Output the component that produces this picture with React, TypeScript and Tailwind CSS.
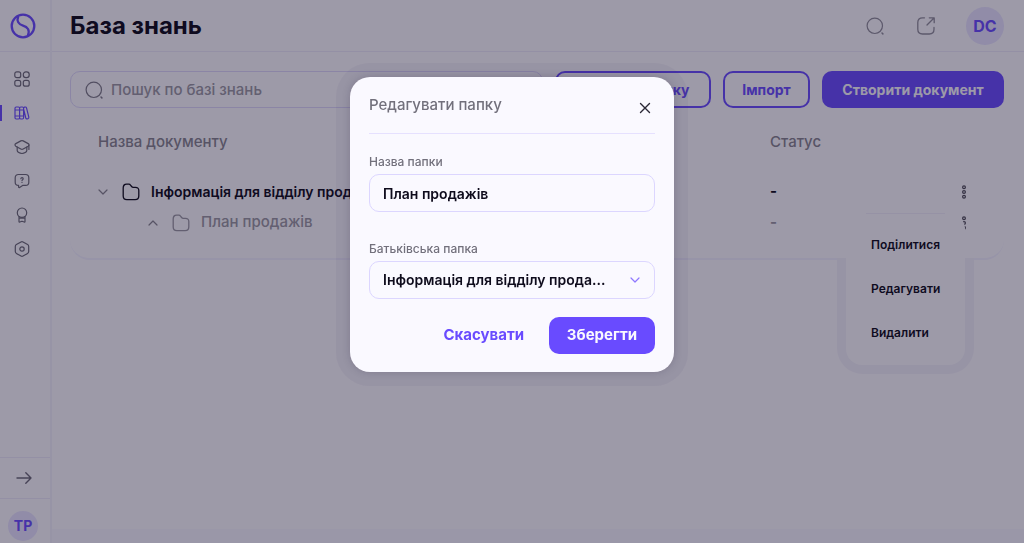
import { FC, ReactNode } from 'react'

type IconProps = { className?: string; children?: ReactNode; viewBox?: string }

const Icon: FC<IconProps> = ({ className = 'size-4', children, viewBox = '0 0 16 16' }) => (
    <svg
        className={`${className} shrink-0`}
        viewBox={viewBox}
        fill="none"
        stroke="currentColor"
        strokeWidth="1.2"
        strokeLinecap="round"
        strokeLinejoin="round"
        aria-hidden="true"
    >
        {children}
    </svg>
)

const SearchIcon: FC<{ className?: string }> = ({ className }) => (
    <Icon className={className} viewBox="0 0 18 18">
        <circle cx="8.8" cy="8.8" r="7.7" />
        <path d="m16 16 .9.9" strokeWidth="1.5" />
    </Icon>
)

const FolderIcon: FC<{ className?: string }> = ({ className }) => (
    <Icon className={className} viewBox="0 0 18 18">
        <path
            d="M1.2 5V13c0 2.4 1.2 3.6 3.6 3.6h8.4c2.4 0 3.6-1.2 3.6-3.6V7.6c0-2.2-1.2-3.3-3.4-3.3h-2.2c-.7 0-1.2-.3-1.6-.8L8.5 2.1C8.1 1.5 7.6 1.2 6.9 1.2H4.6C2.4 1.2 1.2 2.6 1.2 5Z"
            strokeWidth="1.3"
        />
    </Icon>
)

const DotsIcon: FC = () => (
    <Icon className="h-4 w-2" viewBox="0 0 8 16">
        <circle cx="4" cy="3.2" r="1.4" />
        <circle cx="4" cy="8" r="1.4" />
        <circle cx="4" cy="12.8" r="1.4" />
    </Icon>
)

const navItems: { label: string; active?: boolean; icon: ReactNode }[] = [
    {
        label: 'Головна',
        icon: (
            <>
                <rect x=".8" y=".8" width="5.9" height="5.9" rx="2" />
                <rect x="9.3" y=".8" width="5.9" height="5.9" rx="2.6" />
                <rect x=".8" y="9.3" width="5.9" height="5.9" rx="2" />
                <rect x="9.3" y="9.3" width="5.9" height="5.9" rx="2" />
            </>
        )
    },
    {
        label: 'База знань',
        active: true,
        icon: (
            <path d="M1 3.2C1 2.4 1.4 2 2.2 2h2.2c.8 0 1.2.4 1.2 1.2v9.6c0 .8-.4 1.2-1.2 1.2H2.2C1.4 14 1 13.6 1 12.8ZM5.6 3.2c0-.8.4-1.2 1.2-1.2h1.6c.8 0 1.2.4 1.2 1.2v9.6c0 .8-.4 1.2-1.2 1.2H6.8c-.8 0-1.2-.4-1.2-1.2M1 5h8.6M1 11h8.6M9.7 3.4c-.1-.7.1-1.1.8-1.3l.7-.1c.7-.1 1.1.2 1.3.9l2.3 9.3c.2.8-.1 1.2-.8 1.4l-.8.2c-.7.2-1.2-.1-1.4-.8L9.7 4.5" />
        )
    },
    {
        label: 'Курси',
        icon: (
            <>
                <path d="m6.8 1.9-5 2.7c-1.1.6-1.1 1.9 0 2.6l5 2.9c.8.5 1.6.5 2.4 0l5-2.9c1.1-.7 1.1-2 0-2.6l-5-2.7c-.8-.4-1.6-.4-2.4 0Z" />
                <path d="M3.2 8.2v3.3c0 1.6 2.5 3 4.8 3s4.8-1.4 4.8-3V8.2M14.9 6v4.5" />
            </>
        )
    },
    {
        label: 'Тести',
        icon: (
            <>
                <path d="M4.4 1.5h7.2c2 0 3.2 1.2 3.2 3.2v4.5c0 2-1.2 3.2-3.2 3.2H8.6l-3 2c-.5.3-1 .1-1-.5v-1.5c-2.2 0-3.4-1.2-3.4-3.2V4.7c0-2 1.2-3.2 3.2-3.2Z" />
                <path d="M6.9 5.7c0-1.5 2.3-1.4 2.3.1 0 .9-1.2.9-1.2 1.8M8 9.4v.1" />
            </>
        )
    },
    {
        label: 'Досягнення',
        icon: (
            <>
                <circle cx="8" cy="5.7" r="4.7" />
                <path d="M5 9.5v4.9c0 .6.3.8.8.6L8 14.2l2.2.8c.5.2.8 0 .8-.6V9.5M5 11.2h6" />
            </>
        )
    },
    {
        label: 'Налаштування',
        icon: (
            <>
                <path d="m7 .9-4.6 2.7c-.7.4-1.1 1-1.1 1.8v5.2c0 .8.4 1.4 1.1 1.8L7 15.1c.7.4 1.3.4 2 0l4.6-2.7c.7-.4 1.1-1 1.1-1.8V5.4c0-.8-.4-1.4-1.1-1.8L9 .9C8.3.5 7.7.5 7 .9Z" />
                <circle cx="8" cy="8" r="2.2" />
            </>
        )
    }
]

const Sidebar: FC = () => (
    <aside className="flex w-[52px] shrink-0 flex-col border-r-2 border-[#f1effc]">
        <a href="#" aria-label="На головну" className="flex h-[52px] items-center border-b border-[#ebe8fb] pl-[10px] text-[#694bff]">
            <Icon className="size-[26px]" viewBox="0 0 26 26">
                <circle cx="13" cy="13" r="11.3" strokeWidth="2.3" />
                <path d="M8.2 3.8C6.4 8 8.5 11.3 13 12.6c4.7 1.3 7 4.6 5 9.6" strokeWidth="2.3" />
            </Icon>
        </a>
        <nav className="flex flex-col gap-[18px] pt-[19px]">
            {navItems.map(({ label, active, icon }) => (
                <a
                    key={label}
                    href="#"
                    aria-label={label}
                    className={
                        active
                            ? 'flex items-center border-l-2 border-[#694bff] pl-3 text-[#694bff]'
                            : 'flex items-center pl-[14px] text-[#6b6878]'
                    }
                >
                    <Icon>{icon}</Icon>
                </a>
            ))}
        </nav>
        <button aria-label="Розгорнути меню" className="mt-auto flex h-[42px] items-center border-y border-[#ebe8fb] pl-4 text-[#6b6878]">
            <Icon>
                <path d="M1 8h14M9.8 2.8 15 8l-5.2 5.2" strokeWidth="1.4" />
            </Icon>
        </button>
        <div className="flex h-[44px] items-end pb-[2px] pl-2">
            <button className="size-[30px] rounded-full bg-[#e6e1ff] text-sm font-bold text-[#694bff]">ТР</button>
        </div>
    </aside>
)

const Header: FC = () => (
    <header className="flex h-[52px] items-center gap-[30px] border-b border-[#ebe8fb] pl-[18px] pr-5">
        <h1 className="mr-auto text-2xl font-bold text-[#0e0b1c]">База знань</h1>
        <button aria-label="Пошук" className="flex size-5 items-center text-[#8f8c9b]">
            <SearchIcon className="size-[18px]" />
        </button>
        <button aria-label="Відкрити" className="text-[#8f8c9b]">
            <Icon className="size-5" viewBox="0 0 20 20">
                <path d="M8.5 1.8H6.5C3.5 1.8 1.8 3.5 1.8 6.5v6.8c0 3 1.7 4.7 4.7 4.7h6.8c3 0 4.7-1.7 4.7-4.7V11.5M11 9l7-7M13.3 1.8H18.2V6.7" strokeWidth="1.3" />
            </Icon>
        </button>
        <button className="size-[38px] rounded-full bg-[#e6e1ff] text-base font-bold text-[#694bff]">DC</button>
    </header>
)

const Toolbar: FC = () => (
    <div className="flex h-[37px] gap-3 text-sm font-bold">
        <label className="flex min-w-0 flex-1 items-center gap-2 rounded-[10px] border border-[#dcd6fb] px-[14px] text-[#7e7b8a]">
            <SearchIcon className="size-[18px]" />
            <input
                type="search"
                aria-label="Пошук"
                placeholder="Пошук по базі знань"
                className="w-full bg-transparent text-[15px] font-medium outline-none placeholder:text-[#9996a3]"
            />
        </label>
        <button className="w-[156px] rounded-[10px] border-2 border-[#694bff] text-[#694bff]">Створити папку</button>
        <button className="w-[87px] rounded-[10px] border-2 border-[#694bff] text-[#694bff]">Імпорт</button>
        <button className="w-[182px] rounded-[10px] bg-[#694bff] text-[#faf9ff]">Створити документ</button>
    </div>
)

const RowMenu: FC = () => (
    <div className="absolute right-[13px] top-[6px] w-[119px]">
        <div className="absolute -inset-x-[9px] -bottom-[9px] top-[45px] rounded-b-[26px] bg-[#f1eefb]" />
        <ul className="relative rounded-2xl bg-[#faf9ff] py-[10px] text-xs font-semibold text-[#0e0b1c]">
            {['Поділитися', 'Редагувати', 'Видалити'].map(item => (
                <li key={item}>
                    <button className="h-11 w-full pl-[25px] text-left">{item}</button>
                </li>
            ))}
        </ul>
        <div className="absolute inset-x-5 top-0 h-px bg-[#efecfb]" />
    </div>
)

const DocumentsTable: FC = () => (
    <section className="mt-[14px] rounded-[20px] border-b-2 border-[#f0eeff] pb-5 pl-7 pr-[26px]">
        <table className="w-full table-fixed text-left text-[15px] font-medium">
            <colgroup>
                <col />
                <col className="w-[180px]" />
                <col className="w-7" />
            </colgroup>
            <thead className="text-[#86838f]">
                <tr className="h-[54px] align-top">
                    <th className="pt-[9px] font-medium">Назва документу</th>
                    <th className="pt-[9px] font-medium">Статус</th>
                    <th aria-label="Дії" />
                </tr>
            </thead>
            <tbody>
                <tr className="h-[31px] text-[#0e0b1c]">
                    <td>
                        <div className="flex items-center whitespace-nowrap text-sm font-semibold">
                            <button aria-label="Згорнути" className="mr-[14px] text-[#86838f]">
                                <Icon className="size-[10px]" viewBox="0 0 10 10">
                                    <path d="m1 3 4 4 4-4" />
                                </Icon>
                            </button>
                            <FolderIcon className="mr-[11px] size-[18px]" />
                            Інформація для відділу продажів
                        </div>
                    </td>
                    <td className="font-bold">-</td>
                    <td>
                        <button aria-label="Дії з папкою" className="flex w-full justify-center text-[#4d4a58]">
                            <DotsIcon />
                        </button>
                    </td>
                </tr>
                <tr className="h-[31px] text-[#9996a3]">
                    <td>
                        <div className="flex items-center whitespace-nowrap pl-[50px]">
                            <button aria-label="Розгорнути" className="mr-[14px] text-[#86838f]">
                                <Icon className="size-[10px]" viewBox="0 0 10 10">
                                    <path d="m1 7 4-4 4 4" />
                                </Icon>
                            </button>
                            <FolderIcon className="mr-[11px] size-[18px]" />
                            План продажів
                        </div>
                    </td>
                    <td className="font-bold">-</td>
                    <td className="relative">
                        <button aria-label="Дії з папкою" className="flex w-full justify-center text-[#4d4a58]">
                            <DotsIcon />
                        </button>
                        <RowMenu />
                    </td>
                </tr>
            </tbody>
        </table>
    </section>
)

const EditFolderModal: FC = () => (
    <div className="fixed inset-0 flex items-start justify-center bg-[#120d25]/40 pt-[77px]">
        <form
            role="dialog"
            aria-modal="true"
            aria-labelledby="modal-title"
            className="flex w-[324px] flex-col rounded-[20px] bg-[#faf9ff] px-[19px] pb-[18px] shadow-[0_0_8px_rgba(18,13,37,0.18),0_0_0_14px_rgba(60,50,110,0.06)]"
        >
            <div className="flex h-[57px] items-center justify-between border-b border-[#e6e1ff]">
                <h2 id="modal-title" className="text-[15px] font-medium text-[#72707c]">
                    Редагувати папку
                </h2>
                <button type="button" aria-label="Закрити" className="pt-[5px] text-[#2a2735]">
                    <Icon className="size-5" viewBox="0 0 20 20">
                        <path d="m5.5 5.5 9 9m0-9-9 9" strokeWidth="1.4" />
                    </Icon>
                </button>
            </div>

            <label htmlFor="folder-name" className="mt-5 text-xs font-medium leading-4 text-[#72707c]">
                Назва папки
            </label>
            <input
                id="folder-name"
                defaultValue="План продажів"
                className="mt-1 h-[38px] rounded-[10px] border border-[#dcd6ff] px-[13px] text-sm font-semibold text-[#0e0b1c] outline-none"
            />

            <label htmlFor="parent-folder" className="mt-[29px] text-xs font-medium leading-4 text-[#72707c]">
                Батьківська папка
            </label>
            <div className="relative mt-1">
                <select
                    id="parent-folder"
                    className="h-[38px] w-full appearance-none rounded-[10px] border border-[#dcd6ff] pl-[13px] pr-8 text-sm font-semibold text-[#0e0b1c] outline-none"
                >
                    <option>Інформація для відділу прода...</option>
                </select>
                <span className="pointer-events-none absolute inset-y-0 right-[15px] flex items-center text-[#8f78ff]">
                    <Icon className="size-[10px]" viewBox="0 0 10 10">
                        <path d="m1 3 4 4 4-4" />
                    </Icon>
                </span>
            </div>

            <div className="mt-[18px] flex h-[37px] justify-end gap-[25px] text-[15px] font-bold">
                <button type="button" className="text-[#694bff]">
                    Скасувати
                </button>
                <button type="submit" className="w-[106px] rounded-[10px] bg-[#694bff] text-[#faf9ff]">
                    Зберегти
                </button>
            </div>
        </form>
    </div>
)

const App: FC = () => (
    <div className="flex min-h-screen bg-[#faf9ff] font-['Inter','Noto_Sans',sans-serif]">
        <Sidebar />
        <div className="flex min-w-0 flex-1 flex-col">
            <Header />
            <main className="flex-1 pl-[18px] pr-5 pt-[19px]">
                <Toolbar />
                <DocumentsTable />
            </main>
            <div className="h-[14px] bg-[#f6f4ff]" />
        </div>
        <EditFolderModal />
    </div>
)

export default App
